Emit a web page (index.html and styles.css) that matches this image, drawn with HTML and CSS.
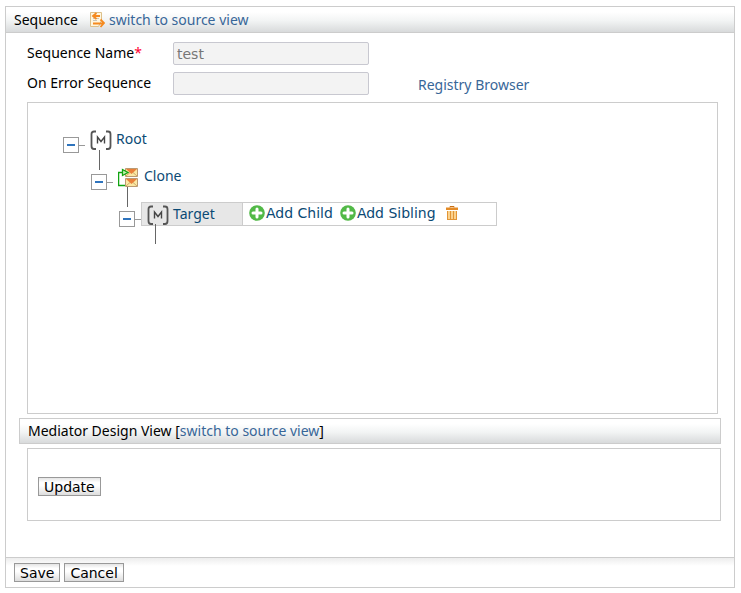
FILE: index.html
```html
<!DOCTYPE html>
<html lang="en">
<head>
<meta charset="utf-8">
<title>Sequence</title>
<link rel="stylesheet" href="styles.css">
</head>
<body>
<svg class="defs" aria-hidden="true">
  <symbol id="mediator" viewBox="0 0 23 21">
    <path d="M6 1.500H4Q1.500 1.500 1.500 4v12q0 3 2.500 3h2M16 1.500h2q2.500 0 2.500 2.500v12q0 3-2.500 3h-2" fill="none" stroke="#555" stroke-width="1.800"/>
    <path d="M7.500 13.500V7l3.500 4.500L14.500 7v6.500" fill="none" stroke="#444" stroke-width="1.400"/>
  </symbol>
  <symbol id="add" viewBox="0 0 16 16">
    <circle cx="8" cy="8" r="7.800" fill="#52b947"/>
    <path d="M8 4v8M4 8h8" stroke="#fff" stroke-width="3" stroke-linecap="round"/>
  </symbol>
</svg>
<form class="panel">
  <header class="bar">
    <span>Sequence</span>
    <a class="switch" href="#source">
      <svg width="16" height="16" viewBox="0 0 16 16" aria-hidden="true">
        <path d="M1.500.5h11v8l-3 6h-8z" fill="#fff6df" stroke="#dcc08a"/>
        <path d="M4 8.500h4M4 6.500h6" stroke="#c9c4b8"/>
        <path d="M7.500 1L4 4l3.500 3M4.500 4H11" fill="none" stroke="#f58a1f" stroke-width="1.800"/>
        <path d="M11.500 7.500l3.500 3.500-3.500 4M14 11.500H4" fill="none" stroke="#f58a1f" stroke-width="1.800"/>
      </svg>
      switch to source view</a>
  </header>
  <main class="content">
    <div class="fields">
      <label for="name">Sequence Name<span class="required">*</span></label>
      <input id="name" type="text" value="test" readonly>
      <label for="error">On Error Sequence</label>
      <input id="error" type="text" readonly>
      <a class="registry" href="#registry">Registry Browser</a>
    </div>
    <section class="tree">
      <ul>
        <li>
          <div class="node">
            <button class="toggle" type="button" aria-label="Collapse Root"></button>
            <a class="name" href="#root"><svg width="23" height="21" aria-hidden="true"><use href="#mediator"/></svg>Root</a>
          </div>
          <ul>
            <li>
              <div class="node">
                <button class="toggle" type="button" aria-label="Collapse Clone"></button>
                <a class="name" href="#clone"><svg width="23" height="21" viewBox="0 0 23 21" aria-hidden="true">
                  <path d="M7.500 1.500h12v8h-12z" fill="#fbe8a4" stroke="#bb9a72"/>
                  <path d="M8 2h11l-5.500 5z" fill="#e9813a"/>
                  <path d="M8 9l4-3.500M19 9l-4-3.500" stroke="#cfa868"/>
                  <path d="M7.500 11.500h12v8h-12z" fill="#fbe8a4" stroke="#bb9a72"/>
                  <path d="M8 12h11l-5.500 5z" fill="#e9813a"/>
                  <path d="M8 19l4-3.500M19 19l-4-3.500" stroke="#cfa868"/>
                  <path d="M7 18.500H.5v-13H4" fill="none" stroke="#11a411" stroke-width="1.500"/>
                  <path d="M4.500 2.500l5.500 3-5.500 3z" fill="#c7efaf" stroke="#11a411" stroke-width="1.300"/>
                </svg>Clone</a>
              </div>
              <ul>
                <li>
                  <div class="node">
                    <button class="toggle" type="button" aria-label="Collapse Target"></button>
                    <div class="selected">
                      <a class="name" href="#target"><svg width="23" height="21" aria-hidden="true"><use href="#mediator"/></svg>Target</a>
                      <div class="actions">
                        <a href="#child"><svg width="17" height="16" viewBox="0 0 17 16" aria-hidden="true"><use href="#add" width="16" height="16"/></svg>Add Child</a>
                        <a href="#sibling"><svg width="17" height="16" viewBox="0 0 17 16" aria-hidden="true"><use href="#add" width="16" height="16"/></svg>Add Sibling</a>
                        <a class="delete" href="#delete" aria-label="Delete"><svg width="12" height="15" viewBox="0 0 12 15" aria-hidden="true">
                          <path d="M4 1.500V.5h4v1" fill="none" stroke="#c96f12"/>
                          <path d="M0 1.500h12V4H0z" fill="#e38a26"/>
                          <path d="M1 5h10v9H1z" fill="#fad28e"/>
                          <path d="M1.500 5v9M4.500 5v9M7.500 5v9M10.500 5v9M1 13.500h10" stroke="#e29536"/>
                        </svg></a>
                      </div>
                    </div>
                  </div>
                </li>
              </ul>
            </li>
          </ul>
        </li>
      </ul>
    </section>
    <h2 class="bar design">Mediator Design View [<a href="#design">switch to source view</a>]</h2>
    <section class="update"><button class="btn" type="button">Update</button></section>
  </main>
  <footer class="footer">
    <button class="btn" type="button">Save</button>
    <button class="btn" type="button">Cancel</button>
  </footer>
</form>
</body>
</html>
```
FILE: styles.css
```css
* { box-sizing: border-box; }
body {
  margin: 6px 6px 5px 5px;
  background: #fff;
  color: #000;
  font: 14px/20px "Noto Sans", "Open Sans", sans-serif;
}
a { color: #386698; text-decoration: none; }
.defs { display: none; }
.panel { border: 1px solid #ccc; }
.bar {
  display: flex;
  align-items: center;
  height: 26px;
  padding: 0 8px;
  border-bottom: 1px solid #ccc;
  background: linear-gradient(#fff 20%, #f2f4f4 55%, #d8dadb);
}
.switch { display: flex; align-items: center; gap: 4px; margin-left: 11px; }
.content { padding: 9px 13px 36px; }
.fields {
  display: grid;
  grid-template-columns: 146px 196px 1fr;
  row-gap: 7px;
  padding-left: 8px;
}
.fields label { grid-column: 1; padding-top: 1px; }
.required { color: #f03; }
.fields input {
  width: 100%;
  height: 23px;
  padding: 0 3px;
  border: 1px solid #c8c8d0;
  border-radius: 2px;
  background: #f3f3f3;
  color: #777;
  font: 14px "DejaVu Sans", sans-serif;
}
.registry { margin-left: 49px; padding-top: 3px; }
.tree {
  min-height: 312px;
  margin: 7px 3px 4px 8px;
  padding: 25px 35px;
  border: 1px solid #ccc;
}
ul { margin: 0; padding: 0; list-style: none; }
ul ul { padding-left: 28px; }
.node { position: relative; display: flex; height: 37px; }
.node::after {
  content: "";
  position: absolute;
  top: 22px;
  left: 36px;
  height: 20px;
  border-left: 1px solid #666;
}
.toggle {
  position: relative;
  width: 16px;
  height: 16px;
  margin: 9px 6px 0 0;
  padding: 0;
  border: 1px solid #999;
  background: linear-gradient(#2f74bd, #2f74bd) center / 8px 2px no-repeat #fff;
}
.toggle::after {
  content: "";
  position: absolute;
  top: 7px;
  left: 15px;
  width: 6px;
  border-top: 1px solid #999;
}
.name {
  display: flex;
  gap: 3px;
  height: 22px;
  padding-left: 5px;
  color: #0b4a75;
  line-height: 22px;
}
.name svg { margin-top: 2px; }
.selected { display: flex; height: 24px; border: 1px solid #ccc; }
.selected .name { width: 101px; background: #e7e7e7; border-right: 1px solid #ccc; }
.actions { display: flex; gap: 7px; width: 253px; padding-left: 6px; font: 14px/20px "DejaVu Sans", sans-serif; }
.actions a { display: flex; align-items: center; height: 20px; color: #0b4a75; }
.actions .delete { padding-left: 3px; }
.design {
  margin: 0;
  border: 1px solid #ccc;
  font-size: 14px;
  font-weight: normal;
}
.update {
  margin: 4px 0 0 8px;
  padding: 28px 10px 24px;
  border: 1px solid #ccc;
}
.btn {
  display: block;
  height: 19px;
  padding: 0 5px;
  border: 1px solid #999;
  background: linear-gradient(#e4e4e4, #fff 25%, #fff 45%, #ddd);
  color: #000;
  font: 14px/16px "DejaVu Sans", sans-serif;
}
.footer {
  display: flex;
  gap: 4px;
  padding: 5px 8px;
  border-top: 1px solid #ccc;
  background: linear-gradient(#ededed, #fff 8px);
}
```
